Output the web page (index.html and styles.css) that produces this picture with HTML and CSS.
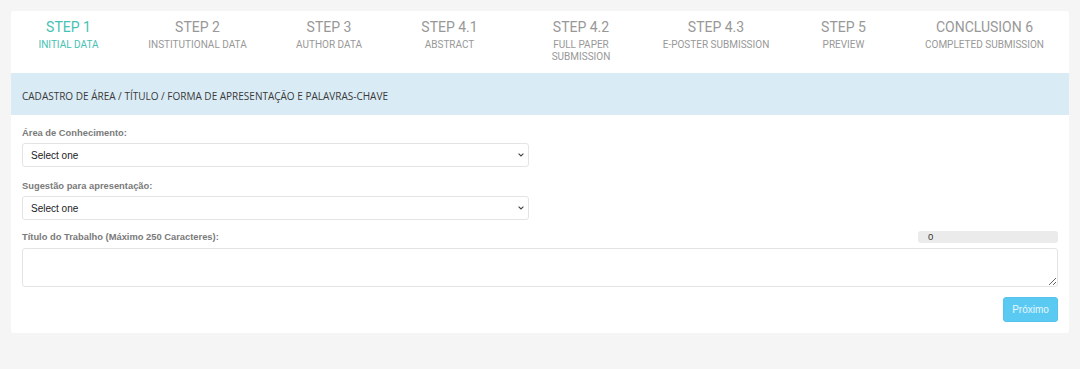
FILE: index.html
```html
<!DOCTYPE html>
<html lang="pt">
<head>
  <meta charset="UTF-8">
  <meta name="viewport" content="width=device-width, initial-scale=1.0">
  <title>Submissão de Trabalho</title>
  <link rel="stylesheet" href="styles.css">
</head>
<body>

  <div class="wizard">
    <div class="steps">
      <div class="step active">
        <div class="step-title">STEP 1</div>
        <div class="step-sub">INITIAL DATA</div>
      </div>
      <div class="step">
        <div class="step-title">STEP 2</div>
        <div class="step-sub">INSTITUTIONAL DATA</div>
      </div>
      <div class="step">
        <div class="step-title">STEP 3</div>
        <div class="step-sub">AUTHOR DATA</div>
      </div>
      <div class="step">
        <div class="step-title">STEP 4.1</div>
        <div class="step-sub">ABSTRACT</div>
      </div>
      <div class="step">
        <div class="step-title">STEP 4.2</div>
        <div class="step-sub">FULL PAPER<br>SUBMISSION</div>
      </div>
      <div class="step">
        <div class="step-title">STEP 4.3</div>
        <div class="step-sub">E-POSTER SUBMISSION</div>
      </div>
      <div class="step">
        <div class="step-title">STEP 5</div>
        <div class="step-sub">PREVIEW</div>
      </div>
      <div class="step">
        <div class="step-title">CONCLUSION 6</div>
        <div class="step-sub">COMPLETED SUBMISSION</div>
      </div>
    </div>

    <div class="panel-heading">CADASTRO DE ÁREA / TÍTULO / FORMA DE APRESENTAÇÃO E PALAVRAS-CHAVE</div>

    <form class="panel-body">
      <div class="form-group">
        <label for="area">Área de Conhecimento:</label>
        <div class="select-wrap">
          <select id="area" class="form-control">
            <option>Select one</option>
          </select>
          <svg class="chevron" width="6" height="4" viewBox="0 0 6 4"><path d="M0.6 0.6 L3 3 L5.4 0.6" fill="none" stroke="#444" stroke-width="1.1"/></svg>
        </div>
      </div>

      <div class="form-group">
        <label for="sugestao">Sugestão para apresentação:</label>
        <div class="select-wrap">
          <select id="sugestao" class="form-control">
            <option>Select one</option>
          </select>
          <svg class="chevron" width="6" height="4" viewBox="0 0 6 4"><path d="M0.6 0.6 L3 3 L5.4 0.6" fill="none" stroke="#444" stroke-width="1.1"/></svg>
        </div>
      </div>

      <div class="form-group title-group">
        <div class="label-row">
          <label for="titulo">Título do Trabalho (Máximo 250 Caracteres):</label>
          <span class="counter">0</span>
        </div>
        <textarea id="titulo" class="form-control"></textarea>
      </div>

      <div class="actions">
        <button type="button" class="btn-next" disabled>Próximo</button>
      </div>
    </form>
  </div>

</body>
</html>
```

FILE: styles.css
```css
body {
  font-family: 'Liberation Sans', Arial, sans-serif;
  background-color: #f5f5f5;
  margin: 0;
  padding: 11px;
  color: #333;
}

.wizard {
  background-color: #fff;
  border-radius: 3px;
  overflow: hidden;
}

.steps {
  display: grid;
  grid-template-columns: 115px 143px 120px 121px 142px 128px 127px 155px;
  height: 62px;
  box-sizing: border-box;
  padding-top: 8px;
}

.step {
  text-align: center;
  font-family: Roboto, sans-serif;
  color: #989898;
}

.step-title {
  font-size: 14px;
  line-height: 17px;
}

.step-sub {
  font-size: 10px;
  line-height: 12px;
  margin-top: 3px;
}

.step.active {
  color: #45c2b2;
}

.panel-heading {
  background-color: #d9ebf5;
  font-family: 'Open Sans', sans-serif;
  font-size: 10px;
  line-height: 14px;
  color: #3a3a3a;
  padding: 16px 11px 12px;
}

.panel-body {
  margin: 0;
  padding: 12px 11px 11px;
}

.form-group {
  margin-bottom: 13px;
}

.form-group label {
  display: block;
  font-size: 9.35px;
  line-height: 13px;
  font-weight: bold;
  color: #7a7a7a;
  margin-bottom: 3px;
}

.form-control {
  display: block;
  box-sizing: border-box;
  border: 1px solid #e4e4e4;
  border-radius: 3px;
  background-color: #fff;
  font-family: 'Liberation Sans', Arial, sans-serif;
  font-size: 10px;
  color: #222;
  outline: none;
}

.select-wrap {
  position: relative;
  width: 507px;
}

select.form-control {
  appearance: none;
  -webkit-appearance: none;
  width: 100%;
  height: 24px;
  padding: 0 8px;
}

.chevron {
  position: absolute;
  right: 5px;
  top: 10px;
  pointer-events: none;
}

.title-group {
  margin-top: -2px;
  margin-bottom: 10px;
}

.label-row {
  display: flex;
  justify-content: space-between;
  align-items: flex-start;
  margin-bottom: 4px;
}

.label-row label {
  margin-bottom: 0;
}

.counter {
  width: 140px;
  height: 12px;
  box-sizing: border-box;
  background-color: #ebebeb;
  border-radius: 3px;
  font-size: 9.5px;
  line-height: 12px;
  padding-left: 10px;
  color: #333;
}

textarea.form-control {
  width: 100%;
  height: 39px;
  padding: 4px 8px;
}

.actions {
  display: flex;
  justify-content: flex-end;
}

.btn-next {
  background-color: #5bcaf3;
  color: #e8f7fd;
  border: 1px solid #54c4ee;
  border-radius: 3px;
  font-family: 'Liberation Sans', Arial, sans-serif;
  font-size: 10px;
  height: 25px;
  width: 55px;
  padding: 0;
  cursor: not-allowed;
}
```
